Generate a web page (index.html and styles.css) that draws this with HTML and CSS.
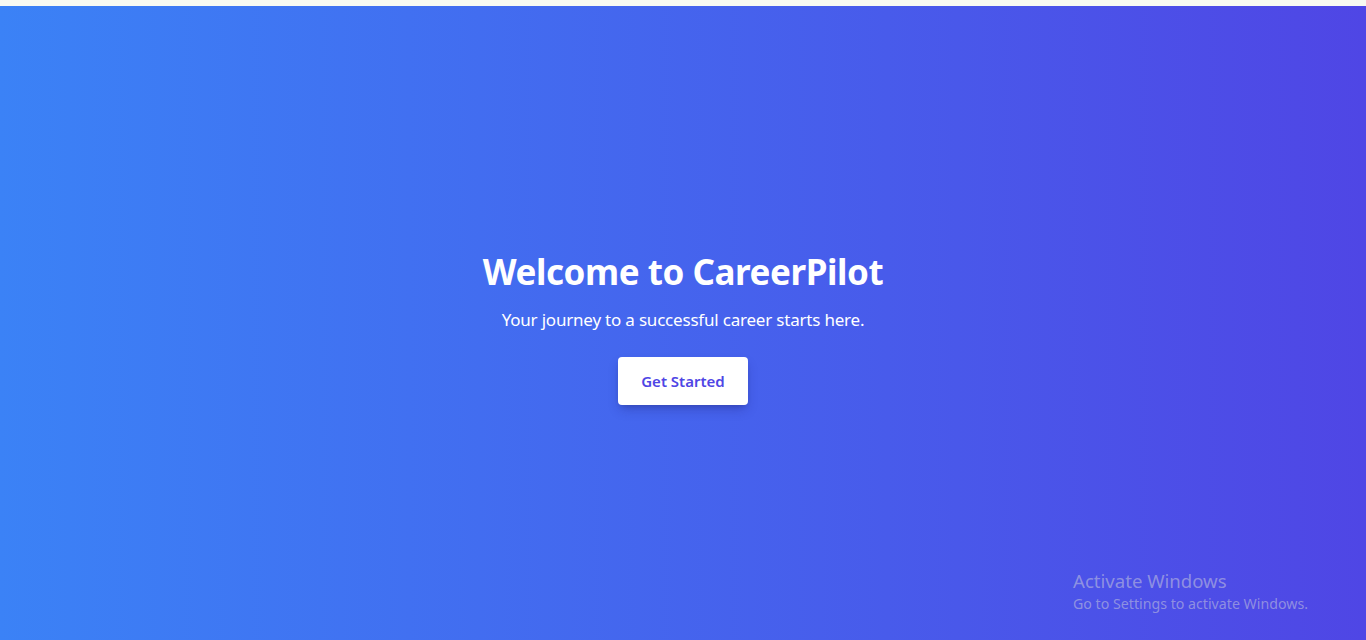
FILE: index.html
```html
<!DOCTYPE html>
<html lang="en">
<head>
<meta charset="utf-8">
<title>CareerPilot</title>
<link rel="stylesheet" href="styles.css">
</head>
<body>
<div class="topbar"></div>
<main class="hero">
  <div class="hero-content">
    <h1 class="hero-title">Welcome to CareerPilot</h1>
    <p class="hero-sub">Your journey to a successful career starts here.</p>
    <button class="hero-btn">Get Started</button>
  </div>
</main>
<div class="watermark">
  <div class="wm-title">Activate Windows</div>
  <div class="wm-sub">Go to Settings to activate Windows.</div>
</div>
</body>
</html>
```
FILE: styles.css
```css
* { box-sizing: border-box; }
html, body { margin: 0; padding: 0; height: 100%; }
body {
  font-family: "Noto Sans", "Open Sans", "Liberation Sans", sans-serif;
  background: #f8faf2;
  overflow: hidden;
}
.topbar { height: 6px; background: #f8faf2; }
.hero {
  height: 634px;
  background: linear-gradient(to right, #3b82f6, #4f46e5);
  display: flex;
  align-items: center;
  justify-content: center;
  padding-top: 10px;
}
.hero-content {
  display: flex;
  flex-direction: column;
  align-items: center;
  text-align: center;
  color: #fff;
}
.hero-title {
  margin: 0 0 14px;
  font-size: 35px;
  line-height: 40px;
  font-weight: 700;
  letter-spacing: -0.45px;
}
.hero-sub {
  margin: 0 0 23px;
  font-size: 17px;
  line-height: 28px;
  letter-spacing: -0.2px;
}
.hero-btn {
  font-family: inherit;
  border: 0;
  background: #fff;
  color: #4f46e5;
  font-size: 15px;
  font-weight: 600;
  width: 130px;
  height: 48px;
  border-radius: 4px;
  box-shadow: 0 6px 12px -2px rgba(30, 30, 120, 0.3), 0 3px 6px -3px rgba(0,0,0,0.2);
  cursor: pointer;
}
.watermark {
  position: absolute;
  left: 1073px;
  top: 569px;
  color: rgba(200, 200, 220, 0.55);
}
.wm-title { font-size: 18.6px; line-height: 24px; }
.wm-sub { font-size: 14.2px; line-height: 20px; margin-top: 1px; }
```
